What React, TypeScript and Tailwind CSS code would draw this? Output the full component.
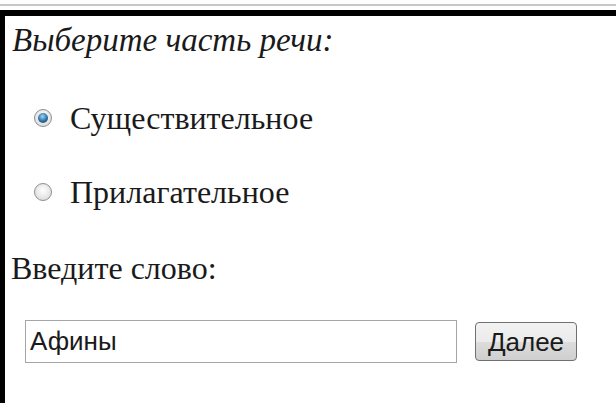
import { useState } from "react";

type RadioProps = {
  label: string;
  checked: boolean;
  onSelect: () => void;
};

// Windows 7 style radio: grey ring with a glossy blue dot when picked
function RadioOption({ label, checked, onSelect }: RadioProps) {
  return (
    <label className="flex items-center h-[52px] pl-[29px] cursor-pointer" onClick={onSelect}>
      <span className="flex justify-center items-center w-[18px] h-[18px] rounded-full border border-[#8f8f8f] bg-[radial-gradient(circle_at_50%_40%,#ffffff,#d4d4d4)]">
        {checked && (
          <span className="w-[10px] h-[10px] rounded-full bg-[radial-gradient(circle_at_45%_35%,#9fd3f2,#2a6fa0_55%,#0d3b5c)]" />
        )}
      </span>
      <span className="ml-[18px] text-[32px] text-[#1a1a1a]">{label}</span>
    </label>
  );
}

export default function App() {
  const [part, setPart] = useState("noun");
  const [word, setWord] = useState("Афины");

  return (
    <div className="w-[616px] h-[403px] bg-white overflow-hidden font-['Liberation_Serif','Times_New_Roman',serif]">
      <div className="h-[4px]" />
      <div className="h-[2px] bg-[#c8c8c8]" />
      <div className="h-[4px]" />
      <div className="h-full border-t-[6px] border-l-[5px] border-black">
        <div className="flex items-center h-[50px] pl-[7px] text-[33px] italic text-[#1a1a1a]">
          Выберите часть речи:
        </div>
        <div className="mt-[26px]">
          <RadioOption label="Существительное" checked={part === "noun"} onSelect={() => setPart("noun")} />
        </div>
        <div className="mt-[22px]">
          <RadioOption label="Прилагательное" checked={part === "adj"} onSelect={() => setPart("adj")} />
        </div>
        <div className="flex items-center mt-[24px] h-[52px] pl-[6px] text-[32px] text-[#1a1a1a]">
          Введите слово:
        </div>
        <div className="flex items-center mt-[26px] pl-[20px] font-['Liberation_Sans',Arial,sans-serif]">
          <input
            value={word}
            onChange={(e) => setWord(e.target.value)}
            className="w-[432px] h-[43px] px-[4px] border border-[#a5a5a5] text-[26px] text-[#1a1a1a] outline-none"
          />
          <button className="ml-[18px] w-[102px] h-[39px] rounded-[4px] border border-[#707070] bg-[linear-gradient(#f2f2f2,#ebebeb_50%,#dddddd_50%,#cfcfcf)] text-[26px] text-[#1a1a1a] leading-none">
            Далее
          </button>
        </div>
      </div>
    </div>
  );
}
